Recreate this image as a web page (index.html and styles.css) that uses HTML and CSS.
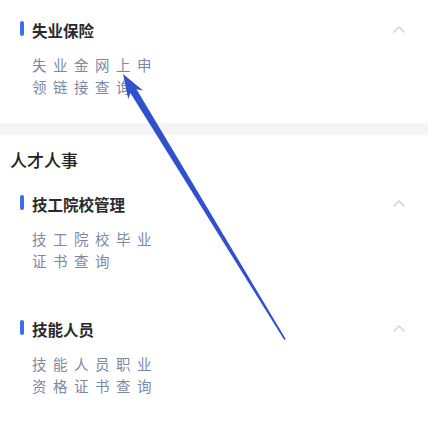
FILE: index.html
```html
<!DOCTYPE html>
<html lang="zh">
<head>
<meta charset="utf-8">
<link rel="stylesheet" href="styles.css">
</head>
<body>
<div class="page">
  <div class="item first">
    <div class="item-head">
      <div class="title"><span class="bar"></span>失业保险</div>
      <svg class="chev" width="14" height="14" viewBox="0 0 14 14"><polyline points="1.5,9.5 7,4 12.5,9.5" fill="none" stroke="#d0d0d0" stroke-width="1.4"/></svg>
    </div>
    <div class="sub">失业金网上申领链接查询</div>
  </div>
  <div class="band"></div>
  <div class="group-head">人才人事</div>
  <div class="item">
    <div class="item-head">
      <div class="title"><span class="bar"></span>技工院校管理</div>
      <svg class="chev" width="14" height="14" viewBox="0 0 14 14"><polyline points="1.5,9.5 7,4 12.5,9.5" fill="none" stroke="#d0d0d0" stroke-width="1.4"/></svg>
    </div>
    <div class="sub">技工院校毕业证书查询</div>
  </div>
  <div class="item">
    <div class="item-head">
      <div class="title"><span class="bar"></span>技能人员</div>
      <svg class="chev" width="14" height="14" viewBox="0 0 14 14"><polyline points="1.5,9.5 7,4 12.5,9.5" fill="none" stroke="#d0d0d0" stroke-width="1.4"/></svg>
    </div>
    <div class="sub">技能人员职业资格证书查询</div>
  </div>
  <svg class="arrow" width="428" height="433" viewBox="0 0 428 433">
    <polygon fill="#3050cc" points="123,76 143,92.5 136.5,91.2 285.7,341.1 284.3,341.9 130.4,95 128.3,101"/>
  </svg>
</div>
</body>
</html>
```
FILE: styles.css
```css
html, body {
  margin: 0;
  padding: 0;
  background: #ffffff;
}
body {
  font-family: "Noto Sans CJK SC", "Noto Sans", "Liberation Sans", sans-serif;
  width: 428px;
  height: 433px;
  overflow: hidden;
}
.page {
  position: relative;
  height: 433px;
}
.item {
  padding: 22px 22px 25px 20px;
}
.item.first {
  margin-top: -2px;
}
.item-head {
  display: flex;
  align-items: center;
  justify-content: space-between;
  height: 20px;
}
.title {
  display: flex;
  align-items: center;
  gap: 8px;
  font-size: 15.5px;
  font-weight: 700;
  color: #2b2b2b;
  line-height: 20px;
}
.bar {
  width: 4px;
  height: 15px;
  border-radius: 2px;
  background: #3b6ee9;
  margin-top: -3px;
}
.chev {
  display: block;
}
.sub {
  margin: 14px 0 0 12px;
  width: 130px;
  font-size: 14.5px;
  letter-spacing: 6.5px;
  line-height: 22px;
  color: #7b89a6;
}
.band {
  height: 12px;
  background: #f5f5f5;
}
.group-head {
  padding: 13px 10px 0;
  font-size: 17px;
  font-weight: 500;
  line-height: 24px;
  color: #222222;
}
.arrow {
  position: absolute;
  left: 0;
  top: 0;
  pointer-events: none;
}
```
